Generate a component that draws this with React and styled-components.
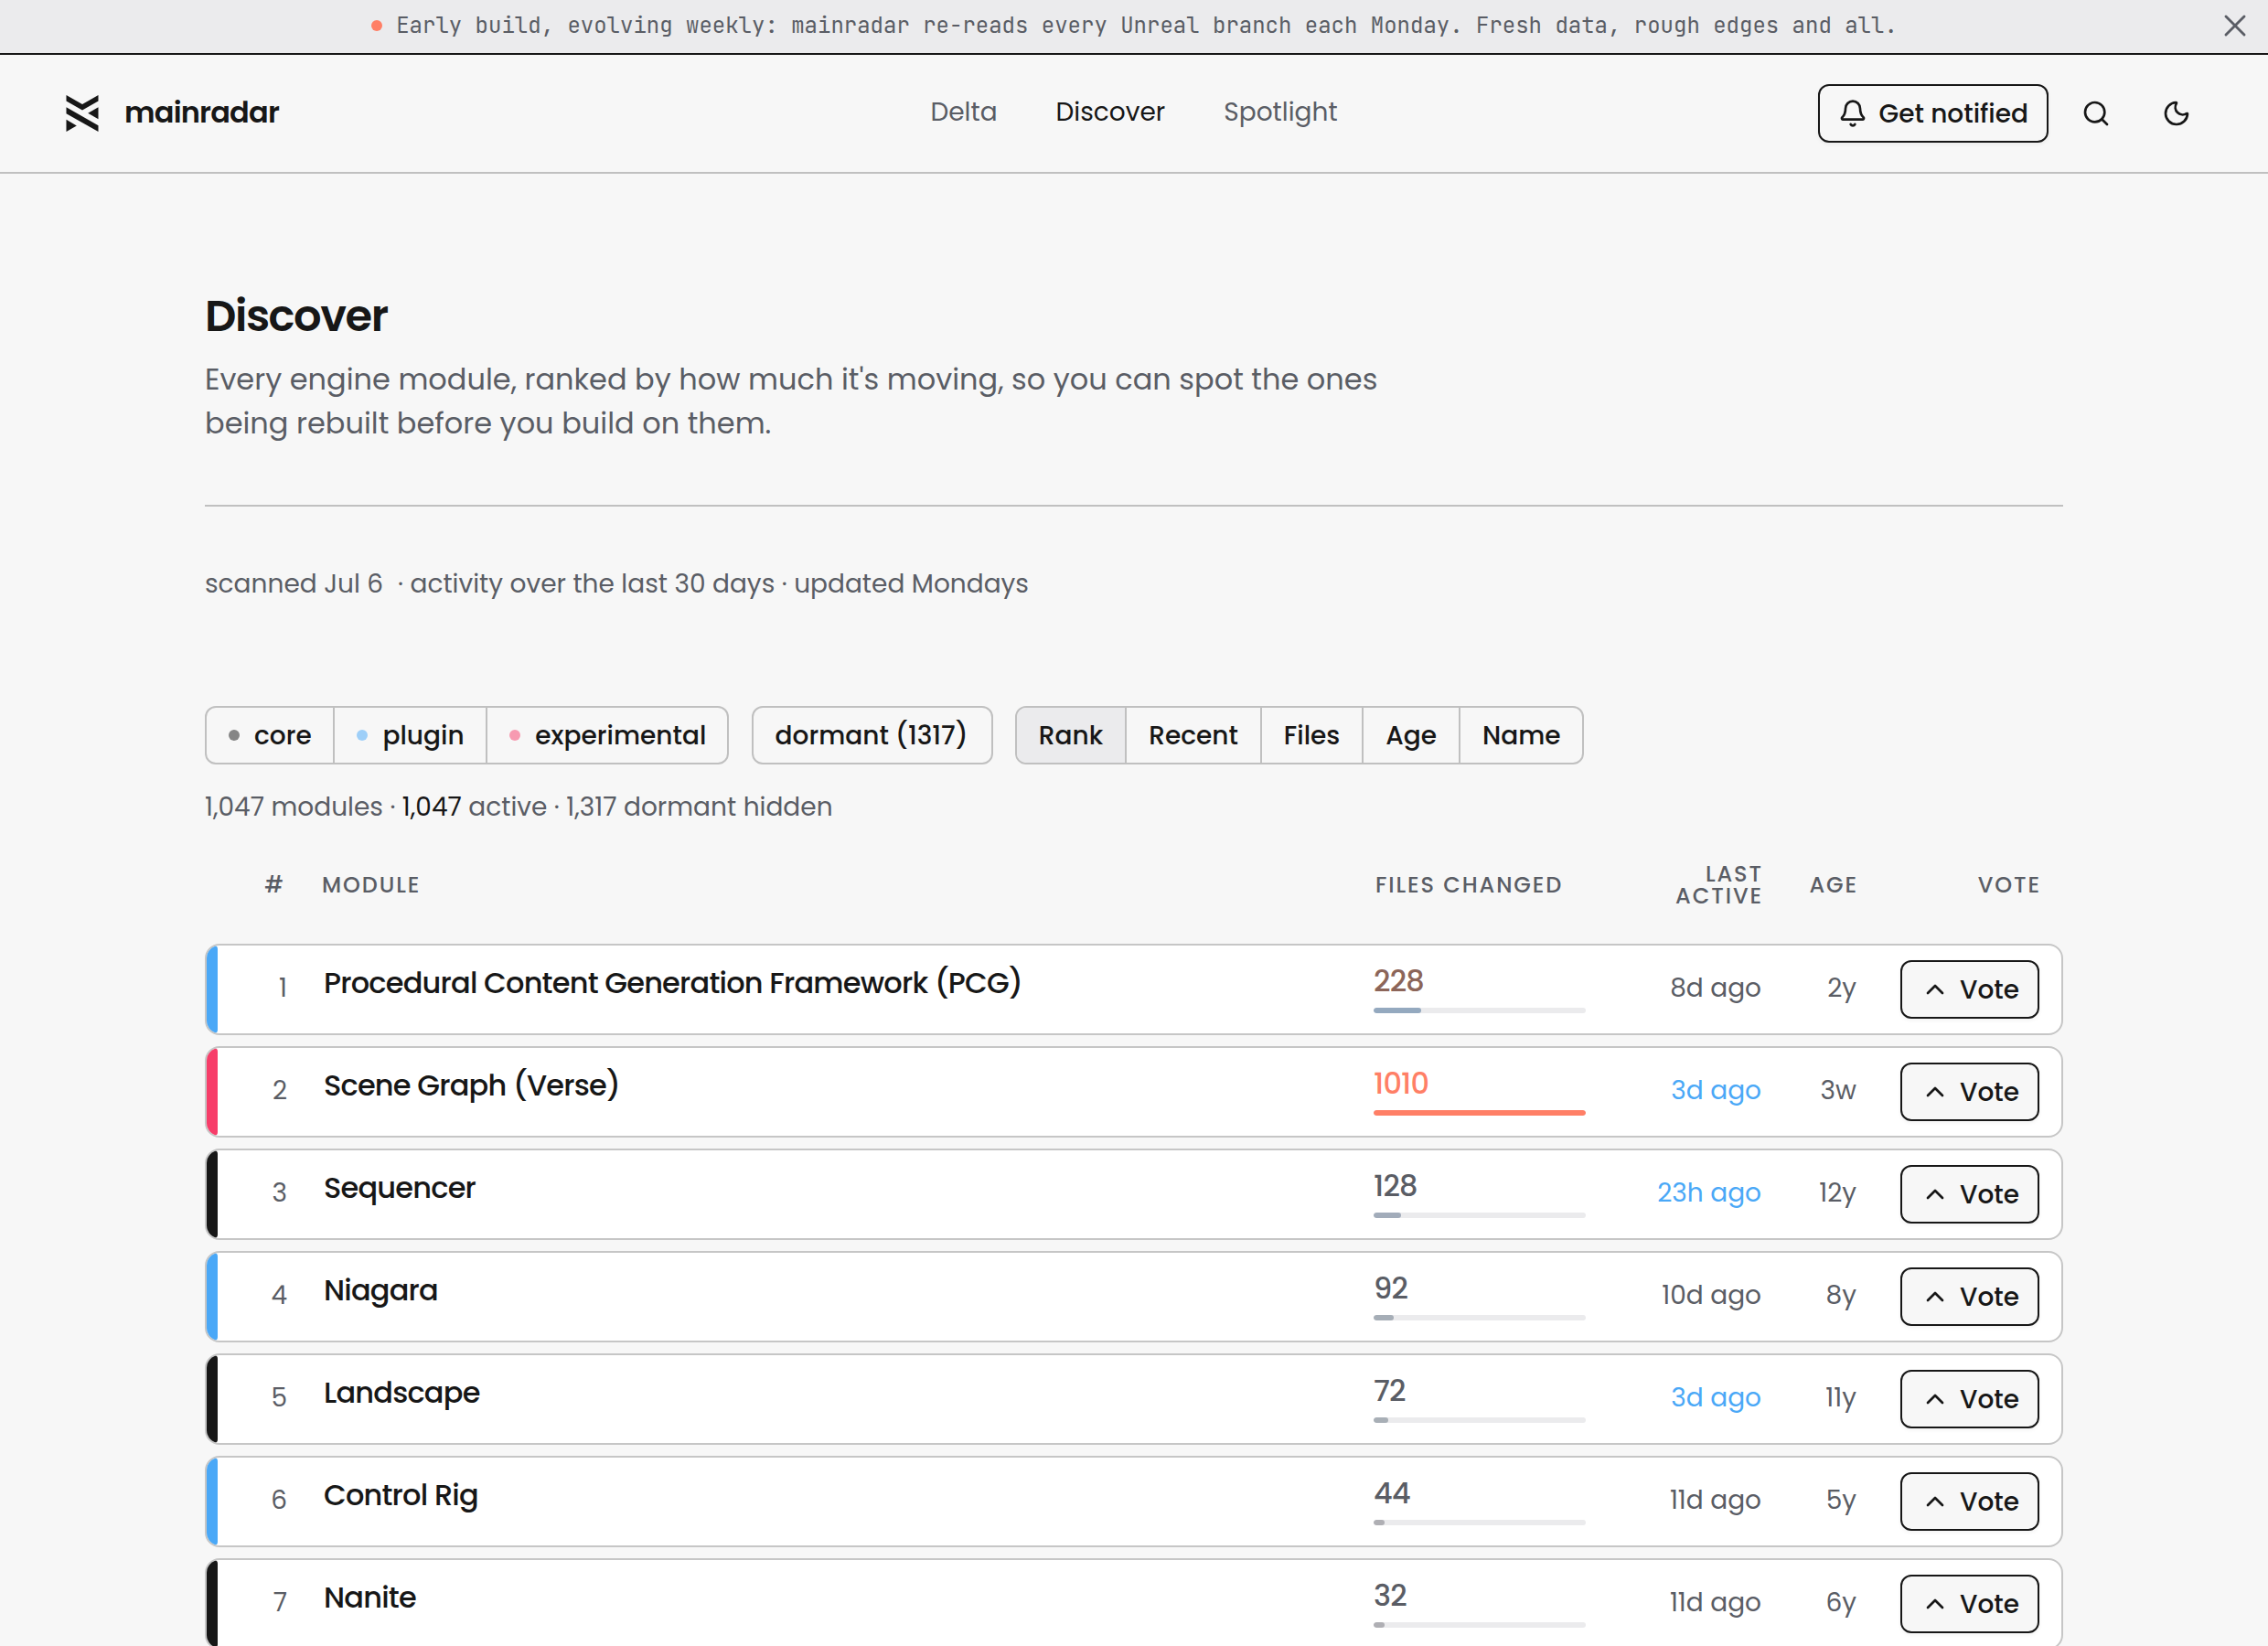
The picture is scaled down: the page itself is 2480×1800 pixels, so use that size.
import React from "react";
import styled, { createGlobalStyle } from "styled-components";
import { Bell, ChevronUp, Moon, Search, X } from "lucide-react";

const ink = "#171717";
const muted = "#5a5d65";
const line = "#c0c0c0";
const blue = "#4aa8f7";
const pink = "#f73d69";
const coral = "#ff7f66";

const GlobalStyle = createGlobalStyle`
  *, *::before, *::after { box-sizing: border-box; }
  body {
    margin: 0;
    background: #f7f7f7;
    color: ${ink};
    font-family: Poppins, Inter, sans-serif;
    font-size: 28px;
    line-height: 42px;
    overflow: hidden;
  }
  button { font: inherit; color: inherit; margin: 0; cursor: pointer; }
`;

const Page = styled.div`
  height: 1800px;
  overflow: hidden;
`;

const Banner = styled.div`
  display: grid;
  grid-template-columns: 1fr auto 1fr;
  align-items: center;
  height: 60px;
  padding: 0 16px 2px;
  background: #ebebed;
  border-bottom: 2px solid ${ink};
`;

const BannerText = styled.p`
  grid-column: 2;
  display: flex;
  align-items: center;
  gap: 15px;
  margin: 0;
  padding-left: 1px;
  font-family: "JetBrains Mono", "DejaVu Sans Mono", monospace;
  font-size: 24px;
  line-height: 36px;
  color: ${muted};
  white-space: nowrap;
`;

const Dot = styled.span`
  flex: none;
  width: 12px;
  height: 12px;
  border-radius: 50%;
  background: ${(p) => p.$color};
`;

const IconButton = styled.button`
  display: grid;
  place-items: center;
  justify-self: end;
  width: ${(p) => p.$size}px;
  height: ${(p) => p.$size}px;
  padding: 0;
  border: 0;
  background: none;
  color: ${(p) => p.$color || ink};
`;

const Header = styled.header`
  display: grid;
  grid-template-columns: 1fr auto 1fr;
  align-items: center;
  height: 130px;
  padding: 0 72px;
  border-bottom: 2px solid ${line};
`;

const Brand = styled.a`
  display: flex;
  align-items: center;
  gap: 28px;
`;

const BrandName = styled.span`
  padding-bottom: 2px;
  font-size: 32px;
  font-weight: 600;
  letter-spacing: -0.025em;
`;

const Nav = styled.nav`
  display: flex;
  gap: 64px;
  padding-bottom: 2px;
`;

const NavLink = styled.a`
  color: ${(p) => (p.$active ? ink : muted)};
`;

const Actions = styled.div`
  display: flex;
  align-items: center;
  justify-content: flex-end;
  gap: 24px;
  margin-right: -4px;
`;

const OutlineButton = styled.button`
  display: flex;
  align-items: center;
  justify-content: space-between;
  width: ${(p) => p.$width}px;
  height: 64px;
  padding: 0 20px;
  border: 2px solid ${ink};
  border-radius: 12px;
  background: #f7f7f7;
  box-shadow: 0 2px 4px rgba(0, 0, 0, 0.05);
  font-weight: 500;
  white-space: nowrap;
`;

const NotifyButton = styled(OutlineButton)`
  margin-right: -4px;
`;

const Label = styled.span`
  padding-top: 1px;
`;

const Main = styled.main`
  padding: 129px 224px 0;
`;

const Intro = styled.section`
  height: 235px;
  border-bottom: 2px solid ${line};
`;

const Title = styled.h1`
  margin: 0 0 18px;
  font-size: 48px;
  line-height: 54px;
  font-weight: 600;
  letter-spacing: -0.03em;
`;

const Lead = styled.p`
  width: 1312px;
  margin: 0;
  font-size: 32px;
  line-height: 48px;
  color: ${muted};
`;

const Scanned = styled.p`
  display: flex;
  gap: 16px;
  margin: 64px 0 112px;
  color: ${muted};
`;

const Toolbar = styled.div`
  display: flex;
  gap: 24.250px;
`;

const Segmented = styled.div`
  display: flex;
  height: 64px;
  border: 2px solid ${line};
  border-radius: 12px;
  overflow: hidden;
`;

const Segment = styled.button`
  display: flex;
  align-items: center;
  gap: 16px;
  padding: 0 24px;
  border: 0;
  border-left: 2px solid ${line};
  background: ${(p) => (p.$active ? "#ebebed" : "transparent")};
  font-weight: 500;
  white-space: nowrap;
  &:first-child { border-left: 0; }
  &:last-child:not(:first-child) { padding-right: 23px; }
`;

const FilterSegment = styled(Segment)`
  padding-right: 23.750px;
`;

const DormantSegment = styled(Segment)`
  padding-right: 25px;
`;

const Counts = styled.p`
  margin: 26px 0 22px;
  color: ${muted};
  b { font-weight: 400; color: ${ink}; }
`;

const TableHead = styled.div`
  display: grid;
  grid-template-columns: 88px 1fr 230px 156px 66px 162px;
  column-gap: 38px;
  align-items: center;
  height: 83px;
  margin-bottom: 23px;
  padding-right: 24px;
  font-size: 24px;
  line-height: 24px;
  font-weight: 500;
  letter-spacing: 0.08em;
  text-transform: uppercase;
  color: ${muted};
`;

const HeadCell = styled.span`
  padding-left: ${(p) => p.$inset || 0}px;
  text-align: ${(p) => (p.$end ? "right" : "left")};
`;

const Rows = styled.div`
  display: flex;
  flex-direction: column;
  gap: 12px;
`;

const Row = styled.article`
  display: flex;
  height: 100px;
  border: 2px solid #c6c6c6;
  border-radius: 16px;
  background: #fff;
  overflow: hidden;
`;

const Stripe = styled.span`
  flex: none;
  width: 12px;
  border-radius: 4px;
  background: ${(p) => p.$color};
`;

const RowGrid = styled.div`
  flex: 1;
  display: grid;
  grid-template-columns: 76px 1fr 232px 154px 66px 162px;
  column-gap: 38px;
  align-items: center;
  padding-right: 24px;
`;

const Cell = styled.span`
  padding-bottom: 3px;
  text-align: right;
  color: ${(p) => p.$color || muted};
  white-space: nowrap;
`;

const Name = styled.h2`
  margin: 0;
  padding: 0 0 14px 2px;
  font-size: 32px;
  line-height: 48px;
  font-weight: 500;
  letter-spacing: -0.025em;
`;

const Files = styled.div`
  display: flex;
  flex-direction: column;
  align-self: start;
  padding-top: 15px;
`;

const FileCount = styled.span`
  height: 53px;
  font-size: 32px;
  line-height: 48px;
  font-weight: 500;
  letter-spacing: -0.025em;
  color: ${(p) => p.$color};
`;

const Track = styled.div`
  height: 6px;
  border-radius: 3px;
  background: #ebebed;
  overflow: hidden;
`;

const Fill = styled.div`
  height: 6px;
  min-width: 12px;
  border-radius: 3px;
  background: ${(p) => p.$color};
`;

const VoteCell = styled.div`
  display: flex;
  justify-content: flex-end;
`;

const kinds = { core: ink, plugin: blue, experimental: pink };
const maxFiles = 1010;
const trackUnits = 116;

const barWidth = (files) => 2 * Math.round((files / maxFiles) * trackUnits);

const filters = [
  { label: "core", color: "#868686" },
  { label: "plugin", color: "#9ecff8" },
  { label: "experimental", color: "#f79ab1" },
];

const sorts = ["Rank", "Recent", "Files", "Age", "Name"];

const modules = [
  { name: "Procedural Content Generation Framework (PCG)", kind: "plugin", files: 228, text: "#8c6559", bar: "#94a9bf", last: "8d ago", age: "2y" },
  { name: "Scene Graph (Verse)", kind: "experimental", files: 1010, text: coral, bar: coral, last: "3d ago", fresh: true, age: "3w" },
  { name: "Sequencer", kind: "core", files: 128, text: muted, bar: "#a2acba", last: "23h ago", fresh: true, age: "12y" },
  { name: "Niagara", kind: "plugin", files: 92, text: muted, bar: "#a6aeb7", last: "10d ago", age: "8y" },
  { name: "Landscape", kind: "core", files: 72, text: muted, bar: "#a8afb6", last: "3d ago", fresh: true, age: "11y" },
  { name: "Control Rig", kind: "plugin", files: 44, text: muted, bar: "#afafb4", last: "11d ago", age: "5y" },
  { name: "Nanite", kind: "core", files: 32, text: muted, bar: "#afafb4", last: "11d ago", age: "6y" },
];

function Logo() {
  return (
    <svg width="36" height="40" viewBox="0 0 36 40" fill={ink} aria-hidden="true">
      <path d="M.5 0 18 10 35.500 0V6.600L18 16.500.5 6.600Z" />
      <path d="M.5 13.200 35.500 33.200V40L.5 20.200Z" />
      <path d="M35.500 13.200V26.200L24.200 19.700Z" />
      <path d="M.5 26.800 11.800 33.400.5 40Z" />
    </svg>
  );
}

function ModuleRow({ rank, item }) {
  return (
    <Row>
      <Stripe $color={kinds[item.kind]} />
      <RowGrid>
        <Cell>{rank}</Cell>
        <Name>{item.name}</Name>
        <Files>
          <FileCount $color={item.text}>{item.files}</FileCount>
          <Track>
            <Fill $color={item.bar} style={{ width: barWidth(item.files) }} />
          </Track>
        </Files>
        <Cell $color={item.fresh && blue}>{item.last}</Cell>
        <Cell>{item.age}</Cell>
        <VoteCell>
          <OutlineButton $width={152}>
            <ChevronUp size={32} />
            <Label>Vote</Label>
          </OutlineButton>
        </VoteCell>
      </RowGrid>
    </Row>
  );
}

export default function App() {
  return (
    <Page>
      <GlobalStyle />
      <Banner>
        <BannerText>
          <Dot $color={coral} />
          Early build, evolving weekly: mainradar re-reads every Unreal branch each Monday. Fresh data, rough edges and all.
        </BannerText>
        <IconButton $size={40} $color={muted} aria-label="Dismiss">
          <X size={40} strokeWidth={1.75} />
        </IconButton>
      </Banner>
      <Header>
        <Brand>
          <Logo />
          <BrandName>mainradar</BrandName>
        </Brand>
        <Nav>
          <NavLink>Delta</NavLink>
          <NavLink $active>Discover</NavLink>
          <NavLink>Spotlight</NavLink>
        </Nav>
        <Actions>
          <NotifyButton $width={252}>
            <Bell size={32} />
            <Label>Get notified</Label>
          </NotifyButton>
          <IconButton $size={64} aria-label="Search">
            <Search size={32} />
          </IconButton>
          <IconButton $size={64} aria-label="Dark mode">
            <Moon size={32} />
          </IconButton>
        </Actions>
      </Header>
      <Main>
        <Intro>
          <Title>Discover</Title>
          <Lead>Every engine module, ranked by how much it's moving, so you can spot the ones being rebuilt before you build on them.</Lead>
        </Intro>
        <Scanned>
          <span>scanned Jul 6</span>
          <span>· activity over the last 30 days · updated Mondays</span>
        </Scanned>
        <Toolbar>
          <Segmented>
            {filters.map((f) => (
              <FilterSegment key={f.label}>
                <Dot $color={f.color} />
                <Label>{f.label}</Label>
              </FilterSegment>
            ))}
          </Segmented>
          <Segmented>
            <DormantSegment>
              <Label>dormant (1317)</Label>
            </DormantSegment>
          </Segmented>
          <Segmented>
            {sorts.map((s) => (
              <Segment key={s} $active={s === "Rank"}>
                <Label>{s}</Label>
              </Segment>
            ))}
          </Segmented>
        </Toolbar>
        <Counts>
          1,047 modules · <b>1,047</b> active · 1,317 dormant hidden
        </Counts>
        <TableHead>
          <HeadCell $end>#</HeadCell>
          <HeadCell $inset={2}>Module</HeadCell>
          <HeadCell>Files changed</HeadCell>
          <HeadCell $end>Last active</HeadCell>
          <HeadCell $end>Age</HeadCell>
          <HeadCell $end>Vote</HeadCell>
        </TableHead>
        <Rows>
          {modules.map((m, i) => (
            <ModuleRow key={m.name} rank={i + 1} item={m} />
          ))}
        </Rows>
      </Main>
    </Page>
  );
}
